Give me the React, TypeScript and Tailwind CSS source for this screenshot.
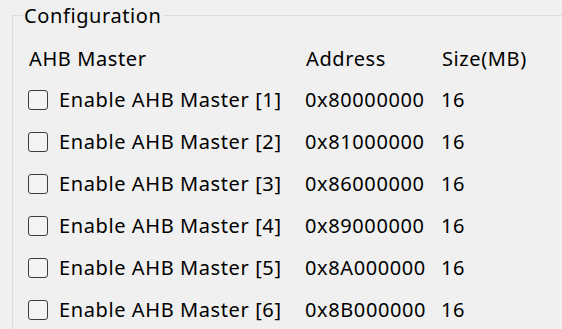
import React from 'react';

const masters = [
    { id: 1, address: "0x80000000", size: "16" },
    { id: 2, address: "0x81000000", size: "16" },
    { id: 3, address: "0x86000000", size: "16" },
    { id: 4, address: "0x89000000", size: "16" },
    { id: 5, address: "0x8A000000", size: "16" },
    { id: 6, address: "0x8B000000", size: "16" },
];

const App = () => {
    return (
        <div
            className="h-[329px] w-[562px] overflow-hidden bg-[#f0f0f0] text-[20px] tracking-[0.6px] text-black"
            style={{ fontFamily: '"Noto Sans", "Open Sans", sans-serif' }}
        >
            <fieldset className="ml-[12px] w-[600px] border border-[#dcdcdc] p-0">
                <legend className="ml-[10px] px-[1px] pt-[2px] leading-[28px]">Configuration</legend>
                <div className="pt-[9px]">
                    <div className="grid h-[40px] grid-cols-[277px_136px_1fr] items-center pl-[16px]">
                        <span>AHB Master</span>
                        <span>Address</span>
                        <span>Size(MB)</span>
                    </div>
                    {masters.map((m) => (
                        <div key={m.id} className="grid h-[42px] grid-cols-[277px_136px_1fr] items-center pl-[15px]">
                            <label className="flex items-center">
                                <span className="h-[20px] w-[20px] rounded-[3px] border border-[#3c3c3c] bg-[#f3f3f3]" />
                                <span className="ml-[11px]">Enable AHB Master [{m.id}]</span>
                            </label>
                            <span>{m.address}</span>
                            <span>{m.size}</span>
                        </div>
                    ))}
                </div>
            </fieldset>
        </div>
    );
};

export default App;
